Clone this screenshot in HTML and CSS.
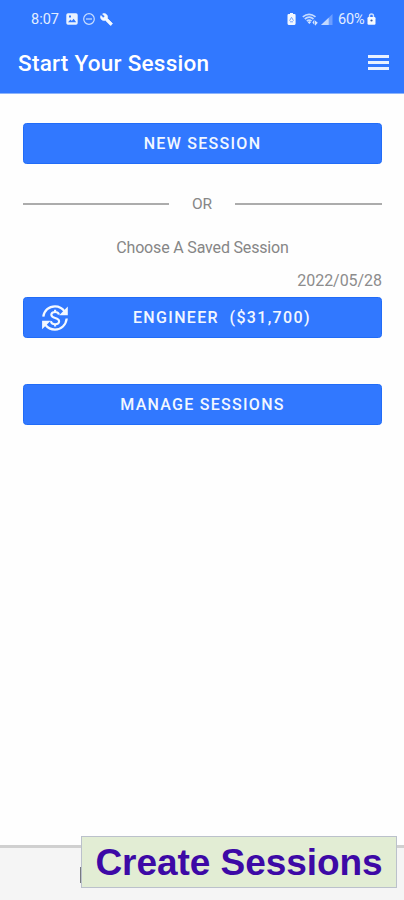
FILE: index.html
```html
<!DOCTYPE html>
<html lang="en">
<head>
<meta charset="utf-8">
<meta name="viewport" content="width=device-width, initial-scale=1">
<title>Start Your Session</title>
<link rel="stylesheet" href="styles.css">
</head>
<body>
<div class="screen">
  <header class="header">
    <div class="status">
      <div class="status-left">
        <span class="clock">8:07</span>
        <svg class="ic-photo" viewBox="0 0 12 12" width="12" height="12"><path fill="#eaf3ff" fill-rule="evenodd" d="M2 .3h8Q11.7.3 11.7 2v8q0 1.7-1.7 1.7H2Q.3 11.7.3 10V2Q.3.3 2 .3ZM2 9.3h8.2L7.6 5.8 5.8 8 4.5 6.6ZM3 2.6v2h2v-2Z"/></svg>
        <svg class="ic-dnd" viewBox="0 0 12 12" width="12" height="12" fill="none" stroke="#c9deff" stroke-width="1.2"><circle cx="6" cy="6" r="5.3"/><path d="M3 6h6"/></svg>
        <svg class="ic-wrench" viewBox="0 0 24 24" width="13" height="13"><path fill="#f4f9ff" stroke="#f4f9ff" stroke-width="1.2" d="M22.7 19l-9.1-9.1c.9-2.3.4-5-1.5-6.9-2-2-5-2.4-7.4-1.3L9 6 6 9 1.6 4.7C.4 7.1.9 10.1 2.9 12.1c1.9 1.9 4.6 2.4 6.9 1.5l9.1 9.1c.4.4 1 .4 1.4 0l2.3-2.3c.5-.4.5-1.1.1-1.4z"/></svg>
      </div>
      <div class="status-right">
        <svg class="ic-saver" viewBox="0 0 9 12" width="9" height="12"><path fill="#f2f7ff" d="M3 0h3v1h1.5Q8.6 1 8.6 2.2v8.4q0 1.3-1.2 1.3H1.7Q.5 11.9.5 10.6V2.2Q.5 1 1.7 1H3Z"/><path fill="none" stroke="#75a5ff" d="M2.6 7.7 4.5 4.3l2 3.4M3 8.8h3"/></svg>
        <svg class="ic-wifi" viewBox="0 0 17 13" width="17" height="13"><g fill="none" stroke="#c5dbff" stroke-width="1.7"><path d="M.8 3.8Q7 -1.2 13.5 3.8M2.8 6Q7.2 2.3 11.5 6M4.8 8.2Q7.2 6.2 9.5 8.2"/></g><path fill="#d6e6ff" d="M5.7 9.2 7.3 11 9 9.2 7.3 8ZM10.4 9.5l2-2.9v5.3ZM13 7.4v5.3l2.8-3Z"/></svg>
        <svg class="ic-signal" viewBox="0 0 12 11" width="12" height="11"><path fill="#6d9eff" d="M11.5 0v11H0Z"/><path fill="#c3d9ff" d="M7.7 3.7V11H0Z"/></svg>
        <span class="battery">60%</span>
        <svg class="ic-lock" viewBox="0 0 9 12" width="9" height="12"><path fill="none" stroke="#cbdfff" stroke-width="1.4" d="M2.5 5V3q0-2 2-2t2 2v2"/><rect x=".5" y="4" width="8" height="7.8" rx="1.2" fill="#f6faff"/><circle cx="4.5" cy="7.5" r="1.1" fill="#34569f"/></svg>
      </div>
    </div>
    <div class="bar">
      <h1 class="title">Start Your Session</h1>
      <div class="menu"><i></i><i></i><i></i></div>
    </div>
  </header>
  <main class="main">
    <div class="btn new"><span>NEW SESSION</span></div>
    <div class="divider"><i></i><span>OR</span><i></i></div>
    <div class="choose"><span>Choose A Saved Session</span></div>
    <div class="date"><span>2022/05/28</span></div>
    <div class="btn saved">
      <svg class="ic-money" viewBox="0 0 28 28" width="28" height="28" fill="none" stroke="#f3f8ff" stroke-width="2.3"><path d="M2.3 12.6C3.1 6.3 8 2.3 14 2.3c4 0 7.3 1.8 9.5 5M25.7 14.5C25 21 20.2 25.6 14 25.6c-4 0-7.3-1.7-9.6-4.8"/><path fill="#f3f8ff" stroke="none" d="M26.8 2.6v8.6h-8.6ZM1.1 25.3v-8.6h8.6Z"/><path stroke-width="2.1" d="M17.9 10.7C17.7 8.8 16.2 8 14.1 8c-2.3 0-3.8 1.1-3.8 2.8 0 4.3 7.8 2 7.8 6.4 0 1.8-1.6 3-4 3s-4-1.1-4.1-3.1M14.1 5.8V8M14.1 20v2.4"/></svg>
      <span class="saved-label">ENGINEER&nbsp; ($31,700)</span>
    </div>
    <div class="btn manage"><span>MANAGE SESSIONS</span></div>
  </main>
  <footer class="footer">
    <div class="stub"></div>
    <div class="caption"><span>Create Sessions</span></div>
  </footer>
</div>
</body>
</html>
```
FILE: styles.css
```css
* { box-sizing: border-box; }
body { margin: 0; background: #fff; font-family: Roboto, sans-serif; }
svg { display: block; flex: none; }
.screen { width: 404px; height: 900px; display: flex; flex-direction: column; overflow: hidden; background: #fefefe; }
.header { height: 94px; background: #3178ff; border-bottom: 1px solid #8db4fb; color: #fff; flex: none; }
.status { height: 38px; display: flex; justify-content: space-between; padding: 0 28px 0 31px; color: #e3eeff; font-size: 14.5px; line-height: 39px; }
.status-left, .status-right { display: flex; align-items: center; }
.clock { width: 29px; letter-spacing: 0; margin-right: 6px; white-space: nowrap; }
.ic-dnd { margin-left: 5px; }
.ic-wrench { margin-left: 5px; }
.ic-wifi { margin-left: 6px; }
.ic-signal { margin-left: 2px; }
.battery { margin-left: 5px; width: 28px; letter-spacing: -0.2px; }
.ic-lock { margin-left: 1px; }
.bar { height: 50px; display: flex; align-items: center; justify-content: space-between; padding: 0 15px 0 18px; }
.title { margin: 0; font-size: 22.5px; line-height: 50px; font-weight: 500; letter-spacing: 0.27px; white-space: nowrap; }
.menu { width: 21px; display: flex; flex-direction: column; gap: 3px; margin-top: -2px; }
.menu i { height: 3px; background: #e9f1ff; }
.main { flex: 1; padding: 29px 22px 0 23px; }
.btn { height: 41px; border-radius: 3.5px; background: #3178ff; border: 1px solid #216cf7; color: #f2f7ff; display: flex; align-items: center; justify-content: center; font-size: 16px; font-weight: 500; letter-spacing: 1.28px; white-space: nowrap; }
.divider { height: 24px; margin-top: 28px; display: flex; align-items: center; color: #878787; font-size: 15.5px; justify-content: space-between; }
.divider i { height: 2px; width: 146px; background: #acacac; }
.divider i:last-child { width: 147px; }
.choose { height: 24px; margin-top: 20px; line-height: 24px; text-align: center; font-size: 16px; letter-spacing: -0.17px; color: #868686; }
.date { height: 24px; margin-top: 9px; line-height: 24px; text-align: right; font-size: 16px; color: #8c8c8c; letter-spacing: -0.05px; }
.saved { margin-top: 4px; justify-content: flex-start; padding-left: 17px; }
.saved-label { margin-left: 64px; letter-spacing: 1.33px; }
.manage { margin-top: 46px; }
.footer { height: 55px; flex: none; position: relative; background: #f5f5f5; border-top: 3px solid #d0d0d0; }
.stub { position: absolute; left: 80px; top: 19px; width: 2px; height: 16px; background: #777980; }
.caption { position: absolute; left: 81px; top: -12px; width: 316px; height: 52px; background: #e2edd4; border: 1px solid #bbc1cb; color: #3d09a6; font: bold 37px/51px "Liberation Sans", Arial, sans-serif; letter-spacing: -0.05px; text-align: center; white-space: nowrap; }
```
